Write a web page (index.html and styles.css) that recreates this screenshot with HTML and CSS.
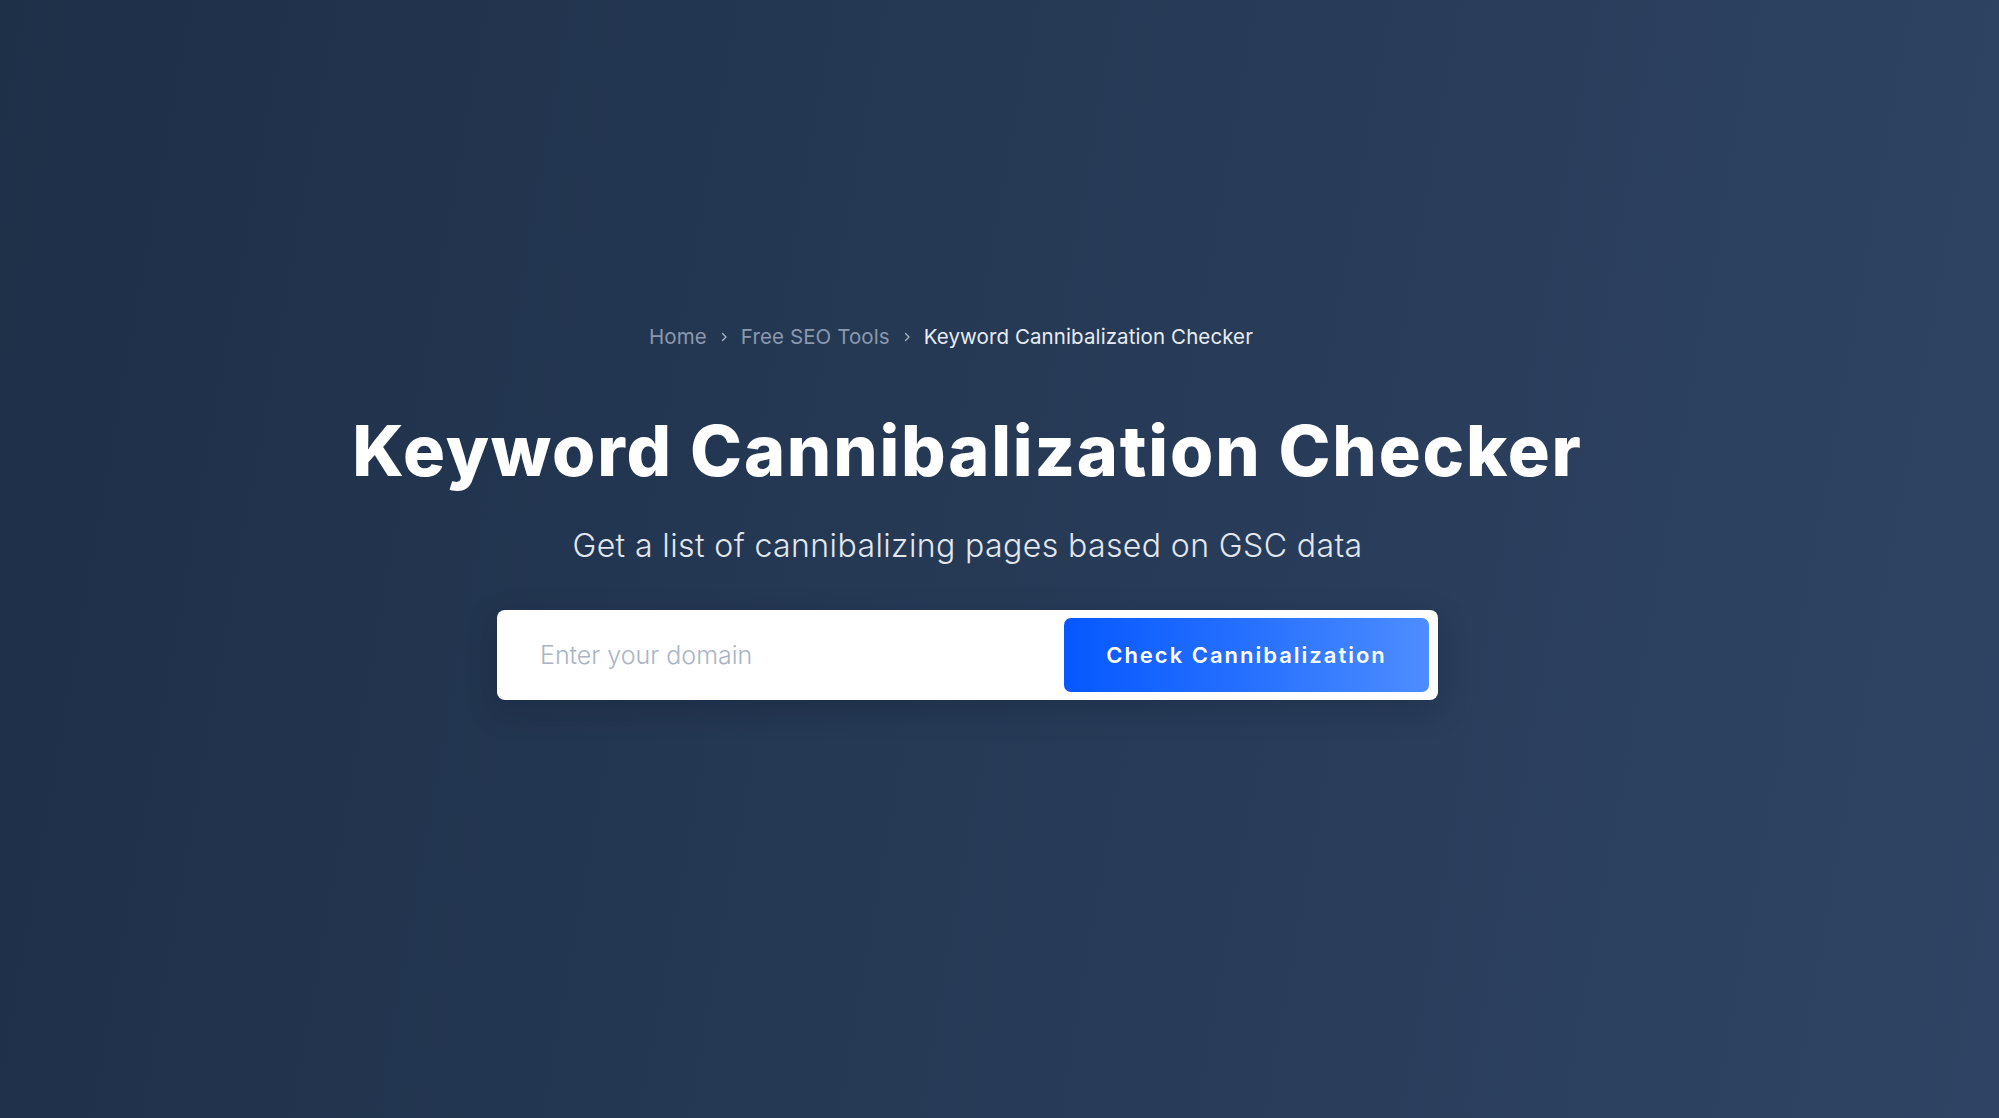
FILE: index.html
```html
<!DOCTYPE html>
<html lang="en">
<head>
    <meta charset="UTF-8">
    <meta name="viewport" content="width=device-width, initial-scale=1.0">
    <title>Keyword Cannibalization Checker</title>
    <link rel="stylesheet" href="styles.css">
</head>
<body>
    <section class="hero">
        <nav class="breadcrumbs">
            <a href="#" class="crumb">Home</a>
            <span class="sep">
                <svg width="12" height="12" viewBox="0 0 12 12"><path d="M4.5 2.5 8 6l-3.5 3.5" fill="none" stroke="currentColor" stroke-width="1.4" stroke-linecap="round" stroke-linejoin="round"/></svg>
            </span>
            <a href="#" class="crumb">Free SEO Tools</a>
            <span class="sep">
                <svg width="12" height="12" viewBox="0 0 12 12"><path d="M4.5 2.5 8 6l-3.5 3.5" fill="none" stroke="currentColor" stroke-width="1.4" stroke-linecap="round" stroke-linejoin="round"/></svg>
            </span>
            <span class="crumb current">Keyword Cannibalization Checker</span>
        </nav>

        <h1 class="title">Keyword Cannibalization Checker</h1>
        <p class="subtitle">Get a list of cannibalizing pages based on GSC data</p>

        <form class="check-form" onsubmit="return false">
            <input type="text" class="domain-input" placeholder="Enter your domain">
            <button type="submit" class="check-btn">Check Cannibalization</button>
        </form>
    </section>
</body>
</html>
```

FILE: styles.css
```css
html, body {
    margin: 0;
    height: 100%;
}

body {
    font-family: Inter, "Open Sans", sans-serif;
    background: linear-gradient(100deg, #1e2f48 0%, #263a56 50%, #2f4464 100%);
    color: #fff;
}

.hero {
    display: flex;
    flex-direction: column;
    align-items: center;
    padding: 323px 64px 0 0;
}

.breadcrumbs {
    display: flex;
    align-items: center;
    padding-right: 33px;
    font-size: 20.5px;
    letter-spacing: 0.1px;
    line-height: 28px;
    height: 28px;
}

.crumb {
    color: #8b98ad;
    text-decoration: none;
}

.crumb.current {
    color: #e8ecf2;
}

.sep {
    display: flex;
    align-items: center;
    color: #a7b2c3;
    margin: 0 11px;
}

.title {
    margin: 60px 0 0;
    font-size: 70px;
    line-height: 80px;
    font-weight: 800;
    letter-spacing: 1.8px;
}

.subtitle {
    margin: 35px 0 0;
    font-size: 32px;
    line-height: 40px;
    font-weight: 300;
    letter-spacing: 0.4px;
    color: #e2e7ee;
}

.check-form {
    display: flex;
    align-items: center;
    width: 941px;
    height: 90px;
    box-sizing: border-box;
    margin-top: 44px;
    padding: 8px 9px 8px 0;
    background: #fff;
    border-radius: 8px;
    box-shadow: 0 10px 30px rgba(10, 20, 40, 0.25);
}

.domain-input {
    flex: 1;
    border: none;
    outline: none;
    background: none;
    padding: 0 0 0 43px;
    font-family: inherit;
    font-size: 25px;
    font-weight: 300;
    color: #1e2f48;
}

.domain-input::placeholder {
    color: #a9b4c6;
}

.check-btn {
    width: 365px;
    height: 74px;
    border: none;
    border-radius: 7px;
    background: linear-gradient(90deg, #0658ff 0%, #2a73ff 55%, #4e8dff 100%);
    color: #fff;
    font-family: inherit;
    font-size: 22px;
    font-weight: 600;
    letter-spacing: 2px;
    cursor: pointer;
}
```
